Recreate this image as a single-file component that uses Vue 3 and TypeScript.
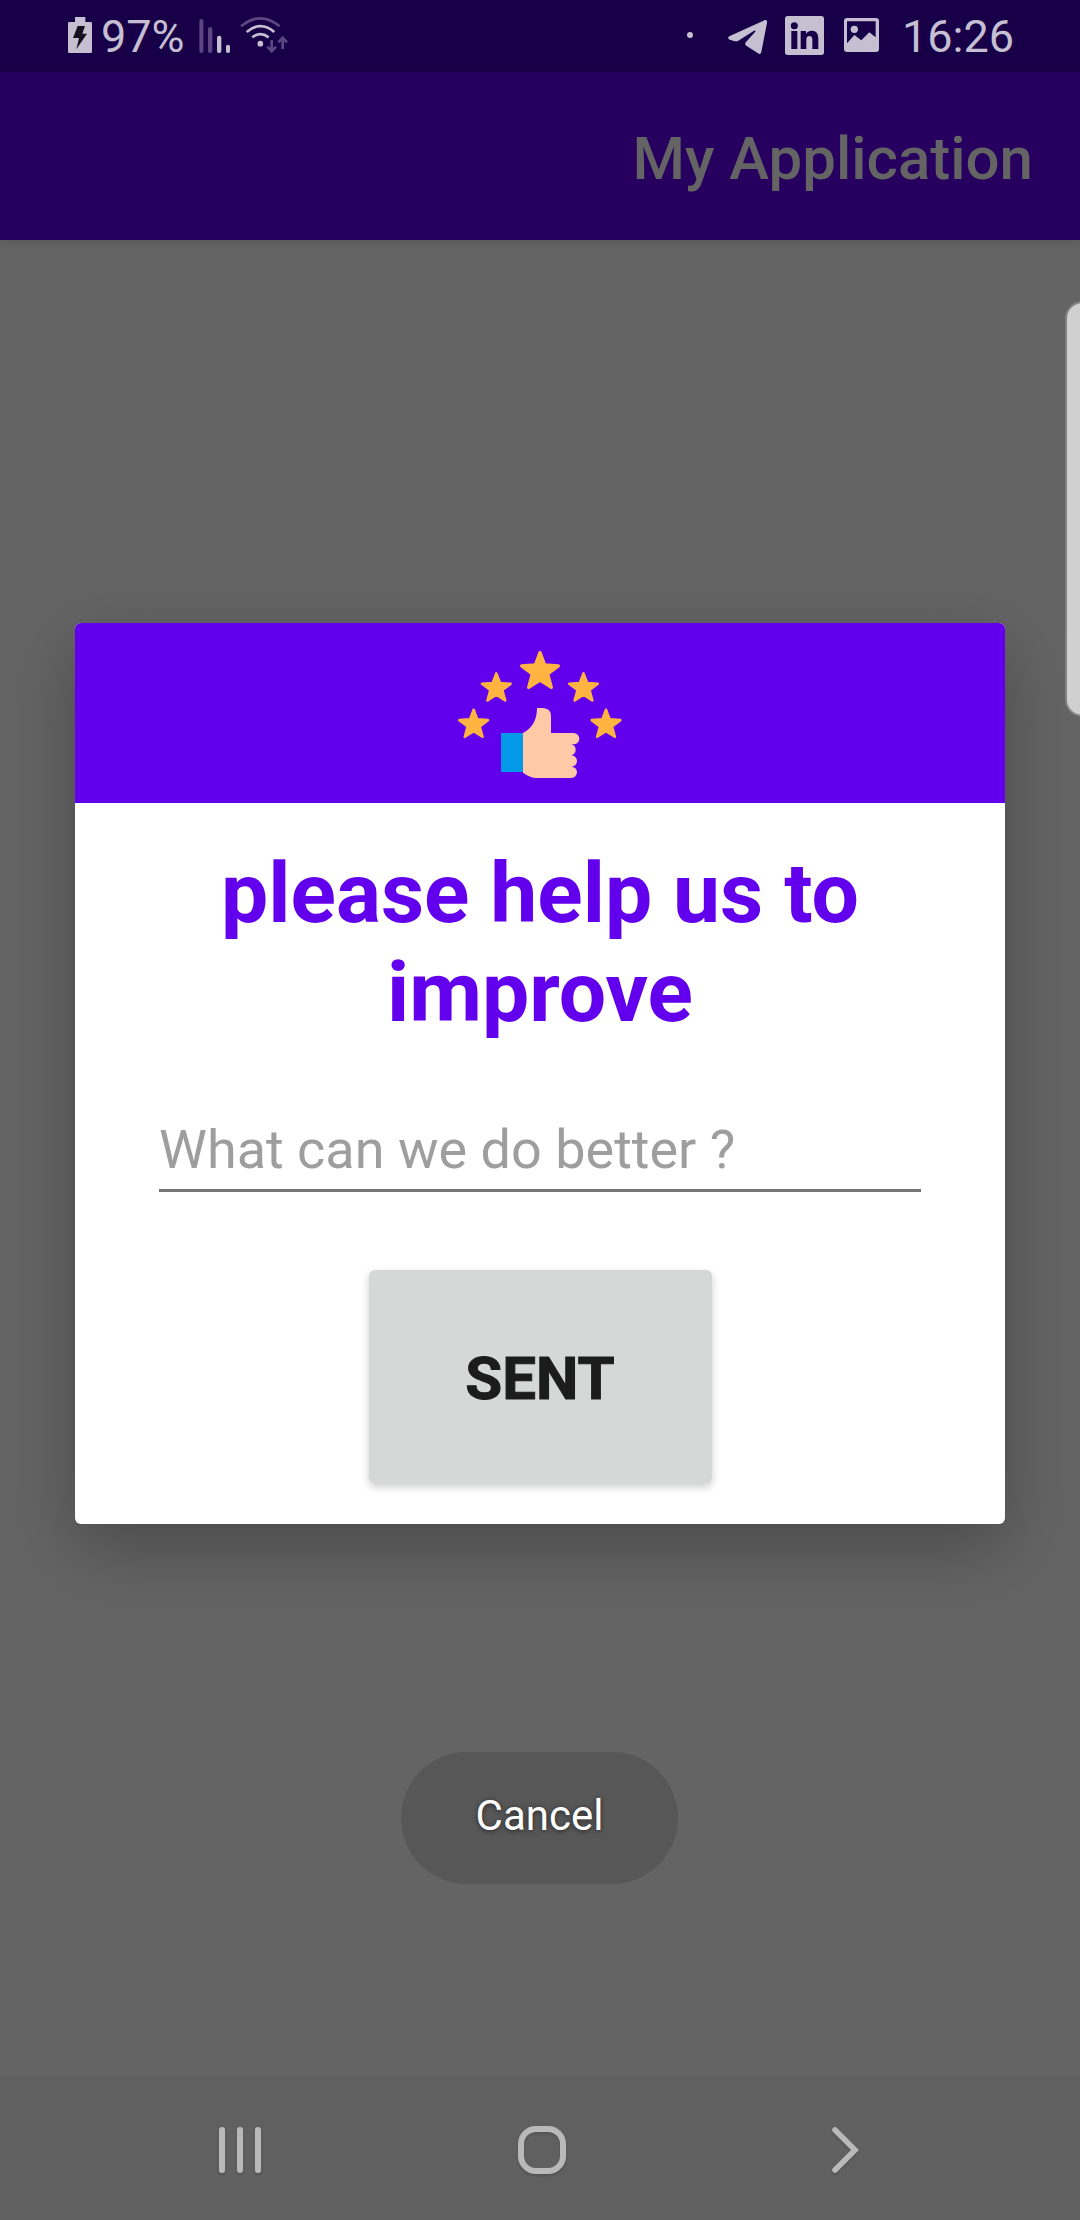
<script setup lang="ts">
import { ref } from 'vue'

interface Star {
  x: number
  y: number
  scale: number
}

const batteryLevel = ref('97%')
const clock = ref('16:26')
const prompt = ref('What can we do better ?')

const stars: Star[] = [
  { x: 101, y: 286, scale: 0.78 },
  { x: 169, y: 177, scale: 0.78 },
  { x: 300, y: 128, scale: 1 },
  { x: 430.5, y: 177, scale: 0.78 },
  { x: 498, y: 286, scale: 0.78 },
]
</script>

<template>
  <div class="screen">
    <header class="status-bar">
      <div class="status-left">
        <svg class="battery" viewBox="54 51 72 108">
          <path d="M75 51h31v15h16q4 0 4 4v85q0 4-4 4H58q-4 0-4-4V70q0-4 4-4h17z" fill="#c5bfd1" />
          <path d="M83 78h22l-8 23h14L79 148l8-34H69z" fill="#16101f" />
        </svg>
        <span class="status-text level">{{ batteryLevel }}</span>
        <svg class="signal" viewBox="448 57 96 102">
          <g fill="#5d4682">
            <rect x="449" y="57" width="12" height="102" rx="6" />
            <rect x="475" y="81" width="13" height="78" rx="6" />
          </g>
          <g fill="#c5bfd1">
            <rect x="502" y="107" width="13" height="52" rx="6" />
            <rect x="529" y="134" width="12" height="25" rx="6" />
          </g>
        </svg>
        <svg class="wifi" viewBox="570 48 147 111">
          <g fill="none" stroke-width="8">
            <path d="M573 79Q631 31 689 79" stroke="#5d4682" />
            <path d="M590 96Q631 61 673 96M607 112Q631 93 656 112" stroke="#c5bfd1" />
          </g>
          <circle cx="631" cy="131" r="8.5" fill="#c5bfd1" />
          <path
            d="M665 120v34M652 140l13 14 13-14M698 147v-34M685 127l13-14 13 14"
            fill="none"
            stroke="#5d4682"
            stroke-width="8"
          />
        </svg>
      </div>
      <div class="status-right">
        <span class="dot"></span>
        <svg class="telegram" viewBox="201 59 117 102">
          <path
            d="M310 60Q319 57 318 67L301 155Q299 164 291 159L257 137Q249 132 255 125L282 95Q286 89 279 91L232 121Q226 124 219 122L206 118Q197 114 205 108Z"
            fill="#c5bfd1"
          />
        </svg>
        <svg class="linkedin" viewBox="372 48 117 117">
          <rect x="372" y="48" width="117" height="117" rx="8" fill="#c5bfd1" />
          <g fill="#180048">
            <circle cx="400" cy="77" r="10.5" />
            <rect x="391" y="93" width="18" height="54" />
            <path d="M419 93h16v8q6-9 18-9 19 0 19 24v31h-18v-28q0-11-9-11-9 0-9 11v28h-17z" />
          </g>
        </svg>
        <svg class="photo" viewBox="549 54 105 102">
          <rect x="549" y="54" width="105" height="102" rx="9" fill="#c5bfd1" />
          <path d="M558 64h86v48l-19-15-24 24-21-16-22 25z" fill="#180048" />
          <circle cx="580" cy="88" r="11" fill="#c5bfd1" />
        </svg>
        <span class="status-text clock">{{ clock }}</span>
      </div>
    </header>

    <div class="app-bar"><h1>My Application</h1></div>

    <main class="body">
      <section class="dialog">
        <div class="dialog-header">
          <svg class="rating" viewBox="0 -21 600 540">
            <g fill="#ffb441" stroke="#ffb441" stroke-width="10" stroke-linejoin="round">
              <path
                v-for="(star, i) in stars"
                :key="i"
                :transform="`translate(${star.x} ${star.y}) scale(${star.scale})`"
                d="M0-60L14-23L55-20L23 4L34 44L0 22L-34 44L-23 4L-55-20L-14-23Z"
              />
            </g>
            <rect x="183" y="309" width="67" height="117" fill="#0499e9" />
            <path
              d="M249 309Q291 287 291 234H309Q333 235 333 259V309H401A17 17 0 0 1 401 343H394A17 17 0 0 1 394 376A17 17 0 0 1 394 410A17 17 0 0 1 394 444H290Q269 443 249 428Z"
              fill="#ffc8a6"
            />
          </svg>
        </div>
        <h2>please help us to<br />improve</h2>
        <div class="field"><span>{{ prompt }}</span></div>
        <button class="send" type="button">SENT</button>
      </section>
      <button class="cancel" type="button">Cancel</button>
    </main>

    <nav class="nav-bar">
      <svg class="nav-icon recents" viewBox="0 0 42 46">
        <g fill="#b9b9b9">
          <rect width="6" height="46" rx="3" />
          <rect x="18" width="6" height="46" rx="3" />
          <rect x="36" width="6" height="46" rx="3" />
        </g>
      </svg>
      <svg class="nav-icon home" viewBox="0 0 48 48">
        <rect x="3" y="3" width="42" height="42" rx="15" fill="none" stroke="#b9b9b9" stroke-width="6" />
      </svg>
      <svg class="nav-icon back" viewBox="0 0 27 46">
        <path d="M3 3L23 23L3 43" fill="none" stroke="#b9b9b9" stroke-width="5.6" stroke-linecap="round" />
      </svg>
    </nav>

    <div class="edge-handle"></div>
  </div>
</template>

<style>
body {
  margin: 0;
}
</style>

<style scoped>
.screen {
  position: relative;
  display: flex;
  flex-direction: column;
  width: 1080px;
  height: 2220px;
  overflow: hidden;
  background: #646464;
  font-family: Roboto, sans-serif;
}
svg {
  display: block;
  flex: none;
}
h1,
h2 {
  margin: 0;
}
button {
  border: 0;
  font-family: inherit;
}
.status-bar {
  display: flex;
  flex: none;
  justify-content: space-between;
  box-sizing: border-box;
  height: 72px;
  padding: 0 68px;
  background: #180048;
}
.status-left,
.status-right {
  display: flex;
  align-items: flex-start;
}
.status-text {
  height: 72px;
  color: #c5bfd1;
  font-size: 45px;
  line-height: 73px;
  white-space: nowrap;
}
.level {
  width: 98px;
  margin-left: 9px;
}
.battery {
  width: 24px;
  height: 36px;
  margin-top: 17px;
}
.signal {
  width: 32px;
  height: 34px;
  margin-top: 19px;
}
.wifi {
  width: 49px;
  height: 37px;
  margin: 16px 0 0 9px;
}
.dot {
  width: 6px;
  height: 6px;
  margin: 32px 35px 0 0;
  border-radius: 50%;
  background: #c5bfd1;
}
.telegram {
  width: 39px;
  height: 34px;
  margin-top: 20px;
}
.linkedin {
  width: 39px;
  height: 39px;
  margin: 16px 0 0 18px;
}
.photo {
  width: 35px;
  height: 34px;
  margin: 18px 0 0 20px;
}
.clock {
  width: 110px;
  margin-left: 23px;
}
.app-bar {
  z-index: 1;
  display: flex;
  flex: none;
  align-items: center;
  justify-content: flex-end;
  box-sizing: border-box;
  height: 168px;
  padding: 5px 47px 0 0;
  background: #27005f;
  box-shadow: 0 2px 10px rgba(0, 0, 0, 0.14);
}
h1 {
  color: #646464;
  font-size: 60px;
  font-weight: 500;
  line-height: 70px;
}
.body {
  display: flex;
  flex: 1;
  flex-direction: column;
  align-items: center;
}
.dialog {
  display: flex;
  flex-direction: column;
  align-items: center;
  width: 930px;
  height: 901px;
  margin-top: 383px;
  overflow: hidden;
  border-radius: 6px;
  background: #fff;
  box-shadow: 0 24px 68px rgba(0, 0, 0, 0.26);
}
.dialog-header {
  display: flex;
  justify-content: center;
  width: 100%;
  height: 180px;
  background: #6200ed;
}
.rating {
  width: 200px;
  height: 180px;
}
h2 {
  margin-top: 41px;
  color: #6200ed;
  font-size: 84px;
  font-weight: 700;
  line-height: 99px;
  text-align: center;
}
.field {
  box-sizing: border-box;
  width: 762px;
  height: 74px;
  margin-top: 76px;
  border-bottom: 3px solid #757575;
  color: #9e9e9e;
  font-size: 54px;
  line-height: 63px;
}
.send {
  width: 343px;
  height: 213px;
  margin: 78px 0 0;
  padding: 4px 0 0;
  border-radius: 6px;
  background: #d6d8d7;
  box-shadow: 0 4px 8px rgba(0, 0, 0, 0.2);
  color: #1c1c1c;
  font-size: 60px;
  font-weight: 700;
  -webkit-text-stroke: 1px #1c1c1c;
}
.cancel {
  width: 277px;
  height: 132px;
  margin: 228px 1px 0 0;
  padding: 0 0 5px;
  border-radius: 66px;
  background: #575757;
  color: #fff;
  font-size: 42px;
  text-shadow: 0 1px 5px rgba(0, 0, 0, 0.6);
}
.nav-bar {
  display: flex;
  flex: none;
  align-items: center;
  box-sizing: border-box;
  height: 144px;
  padding: 4px 0 0 219px;
  background: #606060;
}
.nav-icon {
  overflow: visible;
  filter: drop-shadow(0 2px 1px rgba(0, 0, 0, 0.14));
}
.recents {
  width: 42px;
  height: 46px;
}
.home {
  width: 48px;
  height: 48px;
  margin-left: 257px;
}
.back {
  width: 27px;
  height: 46px;
  margin-left: 266px;
}
.edge-handle {
  position: absolute;
  top: 301px;
  right: -20px;
  z-index: 2;
  box-sizing: border-box;
  width: 35px;
  height: 416px;
  border: 2px solid #828282;
  border-radius: 19px;
  background: #d0d0d0;
}
</style>
